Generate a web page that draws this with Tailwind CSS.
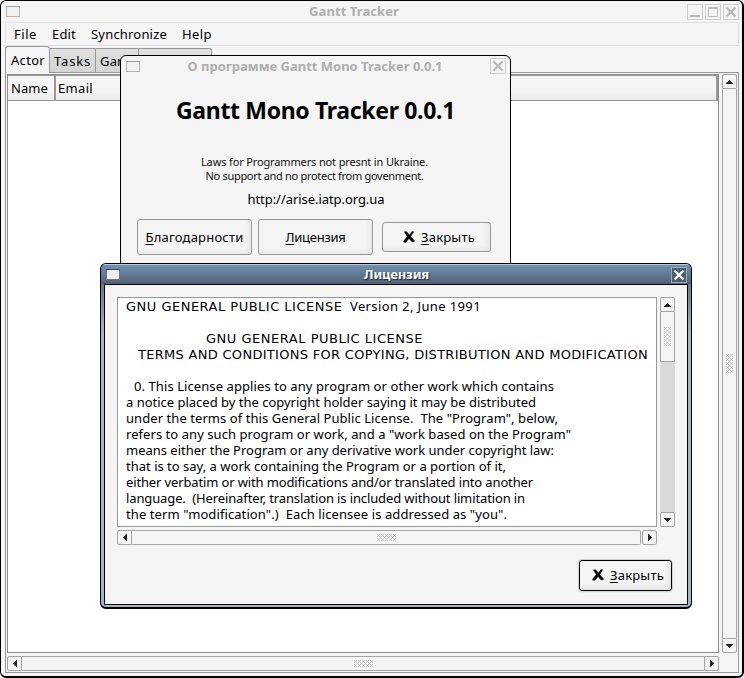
<!DOCTYPE html>
<html lang="ru">
<head>
<meta charset="utf-8">
<title>Gantt Tracker</title>
<script src="https://cdn.jsdelivr.net/npm/@tailwindcss/browser@4"></script>
</head>
<body class="w-[744px] h-[678px] overflow-hidden bg-white font-['Noto_Sans','Open_Sans',sans-serif] text-[13px] leading-[16px] text-black">
<svg class="absolute w-0 h-0">
  <symbol id="up" viewBox="0 0 7 4"><path d="M3 0h1v1h1v1h1v1h1v1H0V3h1V2h1V1h1z" fill="#222"/></symbol>
  <symbol id="down" viewBox="0 0 7 4"><path d="M0 0h7v1H6v1H5v1H4v1H3V3H2V2H1V1H0z" fill="#222"/></symbol>
  <symbol id="left" viewBox="0 0 4 7"><path d="M0 3h1V2h1V1h1V0h1v7H3V6H2V5H1V4H0z" fill="#222"/></symbol>
  <symbol id="right" viewBox="0 0 4 7"><path d="M0 0h1v1h1v1h1v1h1v1H3v1H2v1H1v1H0z" fill="#222"/></symbol>
  <pattern id="dots" width="4" height="4" patternUnits="userSpaceOnUse"><path d="M0 0h1v1H0zM2 0h1v1H2zM1 1h1v1H1zM0 2h1v1H0zM2 2h1v1H2zM3 3h1v1H3z" fill="#c2c2c2"/></pattern>
  <symbol id="cross" viewBox="0 0 12 12"><path d="M1.300 .8h2.500L6.300 4 9 .5l1.800.2L7.600 5.500l3.900 4.200-.4 1.300H9L6 7.500 3 11.300H.8L.6 10l3.700-4.400z" fill="#000" stroke="#000" stroke-width=".4"/></symbol>
</svg>

<!-- Main window -->
<main class="w-[744px] h-[678px] flex flex-col rounded-[6px] border border-r-2 border-b-2 border-black bg-[#f5f5f5] pl-1 pr-[3px]">
  <header class="h-[21px] shrink-0 flex items-center">
    <svg class="w-[14px] h-[11px] ml-px shrink-0" viewBox="0 0 14 11"><rect x=".5" y=".5" width="13" height="10" fill="#f1f1f1" stroke="#b5b5b5"/><path d="M0 .5h14" stroke="#8fa0b0"/></svg>
    <h1 class="flex-1 pl-px -mt-px text-center font-bold text-[#aeaeae]"><span data-w="89">Gantt Tracker</span></h1>
    <div class="flex gap-[2px]">
      <svg class="size-4" viewBox="0 0 16 16"><rect x=".5" y=".5" width="15" height="15" fill="none" stroke="#cfcfcf"/><path d="M3 12h10" stroke="#bbb" stroke-width="2"/></svg>
      <svg class="size-4" viewBox="0 0 16 16"><rect x=".5" y=".5" width="15" height="15" fill="none" stroke="#cfcfcf"/><path d="M3.500 4v8.500h9V4" fill="none" stroke="#bbb"/><path d="M3 4h10" stroke="#bbb" stroke-width="2"/></svg>
      <svg class="size-4" viewBox="0 0 16 16"><rect x=".5" y=".5" width="15" height="15" fill="none" stroke="#cfcfcf"/><path d="m3.500 3.500 9 9m0-9-9 9" stroke="#b8b8b8" stroke-width="2.200"/></svg>
    </div>
  </header>
  <nav class="h-6 shrink-0 flex items-center gap-[15px] border border-[#e1e1e1] pl-2">
    <span data-w="22">File</span><span data-w="23">Edit</span><span data-w="75">Synchronize</span><span data-w="29">Help</span>
  </nav>
  <div class="h-[27px] shrink-0 flex items-end -mb-px z-1">
    <div class="w-[45px] h-[27px] rounded-t-[3px] border border-b-0 border-[#989898] bg-[#f5f5f5] pl-[5px] pt-[5px]"><span data-w="33">Actor</span></div>
    <div class="w-[46px] h-[25px] border border-l-0 border-[#989898] bg-linear-to-b from-[#e0e0e0] to-[#d4d4d4] pl-[4px] pt-[4px]"><span data-w="36">Tasks</span></div>
    <div class="w-[43px] h-[25px] border border-l-0 border-[#989898] bg-linear-to-b from-[#e0e0e0] to-[#d4d4d4] pl-[4px] pt-[4px]"><span data-w="34">Gantt</span></div>
    <div class="w-[73px] h-[25px] rounded-tr-[3px] border border-l-0 border-[#989898] bg-linear-to-b from-[#e0e0e0] to-[#d4d4d4]"></div>
  </div>
  <section class="h-[601px] w-[734px] shrink-0 flex flex-col gap-[3px] border border-[#989898] p-px pr-px">
    <div class="flex gap-[3px] h-[579px]">
      <div class="w-[712px] border border-[#8f8f8f] bg-white">
        <div class="h-[26px] flex border-t border-b border-[#989898] bg-[#f5f5f5]">
          <div class="w-[48px] border-r-2 border-[#989898] pl-[3px] pt-[4px] bg-linear-to-b from-[#f5f5f5] from-60% to-[#ececec]"><span data-w="36">Name</span></div>
          <div class="flex-1 border-r-2 border-[#989898] pl-[2px] pt-[4px] bg-linear-to-b from-[#f5f5f5] from-60% to-[#ececec]"><span data-w="34">Email</span></div>
        </div>
      </div>
      <div class="w-[15px] flex flex-col">
        <div class="h-[15px] rounded-t-[2px] border border-[#a5a5a5] flex items-center justify-center"><svg class="w-[7px] h-1"><use href="#up"/></svg></div>
        <div class="flex-1 border-x border-[#a5a5a5] flex items-center justify-center"><svg class="w-[7px] h-[19px]"><rect width="7" height="19" fill="url(#dots)"/></svg></div>
        <div class="h-[15px] rounded-b-[2px] border border-[#a5a5a5] flex items-center justify-center"><svg class="w-[7px] h-1"><use href="#down"/></svg></div>
      </div>
    </div>
    <div class="flex w-[712px] h-[15px]">
      <div class="w-[15px] rounded-l-[2px] border border-[#a5a5a5] flex items-center justify-center"><svg class="w-1 h-[7px]"><use href="#left"/></svg></div>
      <div class="flex-1 border-y border-[#a5a5a5] flex items-center justify-center"><svg class="w-[19px] h-[7px]"><rect width="19" height="7" fill="url(#dots)"/></svg></div>
      <div class="w-[15px] rounded-r-[2px] border border-[#a5a5a5] flex items-center justify-center"><svg class="w-1 h-[7px]"><use href="#right"/></svg></div>
    </div>
  </section>
</main>

<!-- About window -->
<section class="absolute left-[120px] top-[55px] w-[391px] h-[215px] z-10 rounded-t-[6px] border border-black bg-[#f5f5f5]">
  <header class="h-[20px] flex items-center pl-[5px] pr-1">
    <svg class="w-[14px] h-[11px] shrink-0" viewBox="0 0 14 11"><rect x=".5" y=".5" width="13" height="10" fill="#f1f1f1" stroke="#b5b5b5"/><path d="M0 .5h14" stroke="#8fa0b0"/></svg>
    <h2 class="flex-1 text-center font-bold text-[#aeaeae]"><span data-w="254">О программе Gantt Mono Tracker 0.0.1</span></h2>
    <svg class="size-4" viewBox="0 0 16 16"><rect x=".5" y=".5" width="15" height="15" fill="none" stroke="#cfcfcf"/><path d="m3.500 3.500 9 9m0-9-9 9" stroke="#b8b8b8" stroke-width="2.200"/></svg>
  </header>
  <h3 class="pt-[18px] text-center text-[23px] leading-8 font-bold"><span data-w="278">Gantt Mono Tracker 0.0.1</span></h3>
  <p class="pt-[29px] pr-[2px] text-center text-[11px] leading-[14px] text-[#111]"><span data-w="226">Laws for Programmers not presnt in Ukraine.</span><br><span data-w="217">No support and no protect from govenment.</span></p>
  <p class="pt-[8px] pl-px text-center"><span data-w="136">http://arise.iatp.org.ua</span></p>
  <div class="pt-[12px] pl-4 flex items-center">
    <div class="w-[115px] h-9 rounded-[3px] border border-[#989898] shadow-[inset_-3px_-3px_4px_#e8e8e8] flex items-center justify-center"><span data-w="97"><u class="underline-offset-2">Б</u>лагодарности</span></div>
    <div class="ml-[6px] w-[115px] h-9 rounded-[3px] border border-[#989898] shadow-[inset_-3px_-3px_4px_#e8e8e8] flex items-center justify-center"><span data-w="59"><u class="underline-offset-2">Л</u>ицензия</span></div>
    <div class="ml-[9px] w-[109px] h-[30px] rounded-[3px] border border-[#989898] shadow-[inset_-3px_-3px_4px_#e8e8e8] flex items-center pl-[20px] gap-[6px]"><svg class="size-3"><use href="#cross"/></svg><span data-w="53"><u class="underline-offset-2">З</u>акрыть</span></div>
  </div>
</section>

<!-- License window -->
<section class="absolute left-[100px] top-[263px] w-[592px] h-[346px] z-20 rounded-[6px] border border-b-2 border-black overflow-hidden bg-linear-to-b from-[#506175] via-[#9fb5cb] via-20% to-[#9fb5cb]">
  <header class="h-5 flex items-center border-t border-[#b4cadf] bg-linear-to-b from-[#7191b3] to-[#506175] pl-[5px] pr-1">
    <svg class="w-[14px] h-[11px] shrink-0" viewBox="0 0 14 11"><rect x=".5" y=".5" width="13" height="10" fill="#eee" stroke="#777"/><path d="M0 .5h14" stroke="#334c6c"/></svg>
    <h2 class="flex-1 pl-[2px] -mt-px text-center font-bold text-white [text-shadow:1px_1px_1px_#1d2a38]"><span data-w="64">Лицензия</span></h2>
    <svg class="size-4" viewBox="0 0 16 16"><rect x=".5" y=".5" width="15" height="15" fill="#4c5f76" stroke="#9aacbe"/><path d="m3.500 3.500 9 9m0-9-9 9" stroke="#fff" stroke-width="2.400"/></svg>
  </header>
  <div class="mx-[3px] h-[321px] border border-black bg-[#f5f5f5] pt-3 pl-3">
    <div class="flex gap-[3px] h-[230px]">
      <div class="w-[540px] border border-[#989898] bg-white pl-2 overflow-hidden">
        <div class="h-4"><span class="font-['DejaVu_Sans',sans-serif]" data-w="220">GNU GENERAL PUBLIC LICENSE </span><span class="pl-[3px]" data-w="130">Version 2, June 1991</span></div>
        <div class="h-4"></div>
        <div class="h-4 pl-[80px]"><span class="font-['DejaVu_Sans',sans-serif]" data-w="216">GNU GENERAL PUBLIC LICENSE</span></div>
        <div class="h-4 pl-[12px]"><span class="font-['DejaVu_Sans',sans-serif]" data-w="509">TERMS AND CONDITIONS FOR COPYING, DISTRIBUTION AND MODIFICATION</span></div>
        <div class="h-4"></div>
        <div class="h-4 pl-[8px]"><span data-w="419">0. This License applies to any program or other work which contains</span></div>
        <div class="h-4"><span data-w="409">a notice placed by the copyright holder saying it may be distributed</span></div>
        <div class="h-4"><span data-w="431">under the terms of this General Public License.  The "Program", below,</span></div>
        <div class="h-4"><span data-w="444">refers to any such program or work, and a "work based on the Program"</span></div>
        <div class="h-4"><span data-w="427">means either the Program or any derivative work under copyright law:</span></div>
        <div class="h-4"><span data-w="379">that is to say, a work containing the Program or a portion of it,</span></div>
        <div class="h-4"><span data-w="406">either verbatim or with modifications and/or translated into another</span></div>
        <div class="h-4"><span data-w="398">language.  (Hereinafter, translation is included without limitation in</span></div>
        <div class="h-4"><span data-w="380">the term "modification".)  Each licensee is addressed as "you".</span></div>
      </div>
      <div class="w-[15px] flex flex-col bg-[#d9d9d9]">
        <div class="h-[15px] rounded-t-[2px] border border-[#a5a5a5] bg-[#f5f5f5] flex items-center justify-center"><svg class="w-[7px] h-1"><use href="#up"/></svg></div>
        <div class="h-[50px] rounded-b-[2px] border border-t-0 border-[#a5a5a5] bg-[#f5f5f5] flex items-center justify-center"><svg class="w-[7px] h-[19px]"><rect width="7" height="19" fill="url(#dots)"/></svg></div>
        <div class="mt-auto h-[15px] rounded-[2px] border border-[#a5a5a5] bg-[#f5f5f5] flex items-center justify-center"><svg class="w-[7px] h-1"><use href="#down"/></svg></div>
      </div>
    </div>
    <div class="mt-[3px] flex w-[540px] h-[15px]">
      <div class="w-[15px] rounded-l-[2px] border border-[#a5a5a5] flex items-center justify-center"><svg class="w-1 h-[7px]"><use href="#left"/></svg></div>
      <div class="flex-1 border-y border-r border-[#a5a5a5] rounded-r-[2px] flex items-center justify-center"><svg class="w-[19px] h-[7px]"><rect width="19" height="7" fill="url(#dots)"/></svg></div>
      <div class="ml-px w-[15px] rounded-[2px] border border-[#a5a5a5] flex items-center justify-center"><svg class="w-1 h-[7px]"><use href="#right"/></svg></div>
    </div>
    <div class="mt-[15px] ml-[462px] w-[93px] h-[31px] rounded-[3px] border border-black shadow-[inset_-3px_-3px_4px_#e4e4e4,0_0_2px_#777] flex items-center pb-[2px] pl-[12px] gap-[6px]"><svg class="size-3"><use href="#cross"/></svg><span data-w="53"><u class="underline-offset-2">З</u>акрыть</span></div>
  </div>
</section>
<script>
// Track each label so that it fills its nominal width.
function fit() {
  document.querySelectorAll('[data-w]').forEach(function (el) {
    el.style.whiteSpace = 'pre';
    el.style.letterSpacing = '0px';
    var range = document.createRange();
    range.selectNodeContents(el);
    var gap = (+el.dataset.w + 1 - range.getBoundingClientRect().width) / el.textContent.length;
    el.style.letterSpacing = gap.toFixed(3) + 'px';
  });
}
addEventListener('load', function () {
  fit();
  requestAnimationFrame(fit);
  document.fonts.ready.then(fit);
});
</script>
</body>
</html>
